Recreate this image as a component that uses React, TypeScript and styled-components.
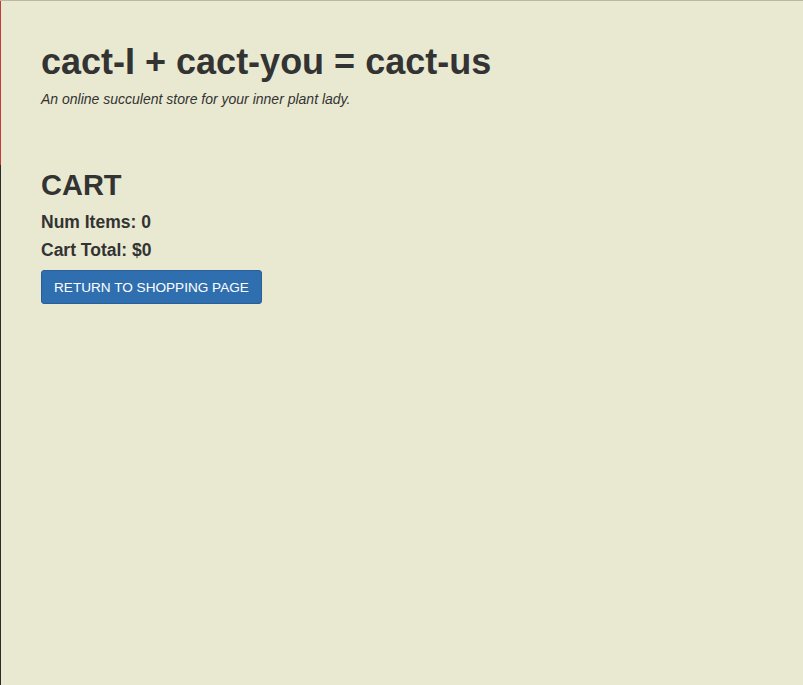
import React from "react";
import styled, { createGlobalStyle } from "styled-components";

const Global = createGlobalStyle`
  html, body { margin: 0; padding: 0; height: 100%; }
  body {
    background: #e9e9d1;
    color: #333;
    font-family: "Liberation Sans", Arial, sans-serif;
  }
  #root { min-height: 100%; }
`;

const Page = styled.div`
  box-sizing: border-box;
  min-height: 685px;
  background:
    linear-gradient(#b9b99f, #b9b99f) left top / 100% 1px no-repeat,
    linear-gradient(to bottom, #c43a3a 0, #c43a3a 165px, #2a2a2a 165px) left top / 1px 100% no-repeat,
    #e9e9d1;
  padding: 41px 41px 40px;
  display: flex;
  flex-direction: column;
`;

const Header = styled.header`
  display: flex;
  flex-direction: column;
`;

const Title = styled.h1`
  margin: 0;
  font-size: 36px;
  font-weight: 700;
  line-height: 42px;
`;

const Tagline = styled.p`
  margin: 7px 0 0;
  font-size: 14px;
  font-style: italic;
  line-height: 18px;
`;

const Cart = styled.section`
  margin-top: 59px;
  display: flex;
  flex-direction: column;
  align-items: flex-start;
`;

const CartTitle = styled.h2`
  margin: 0;
  font-size: 29px;
  font-weight: 700;
  line-height: 36px;
`;

const Stat = styled.h4`
  margin: 0;
  font-size: 17.5px;
  font-weight: 700;
  line-height: 28px;
  &:first-of-type { margin-top: 5px; }
`;

const Button = styled.button`
  margin-top: 6px;
  height: 34px;
  padding: 0 12px;
  background: #2f6fb0;
  border: 1px solid #285f99;
  border-radius: 3px;
  color: #fff;
  font-family: "Liberation Sans", Arial, sans-serif;
  font-size: 13.6px;
  text-transform: uppercase;
  cursor: pointer;
`;

export default function App() {
  return (
    <>
      <Global />
      <Page>
        <Header>
          <Title>cact-I + cact-you = cact-us</Title>
          <Tagline>An online succulent store for your inner plant lady.</Tagline>
        </Header>
        <Cart>
          <CartTitle>CART</CartTitle>
          <Stat>Num Items: 0</Stat>
          <Stat>Cart Total: $0</Stat>
          <Button>Return to shopping page</Button>
        </Cart>
      </Page>
    </>
  );
}
